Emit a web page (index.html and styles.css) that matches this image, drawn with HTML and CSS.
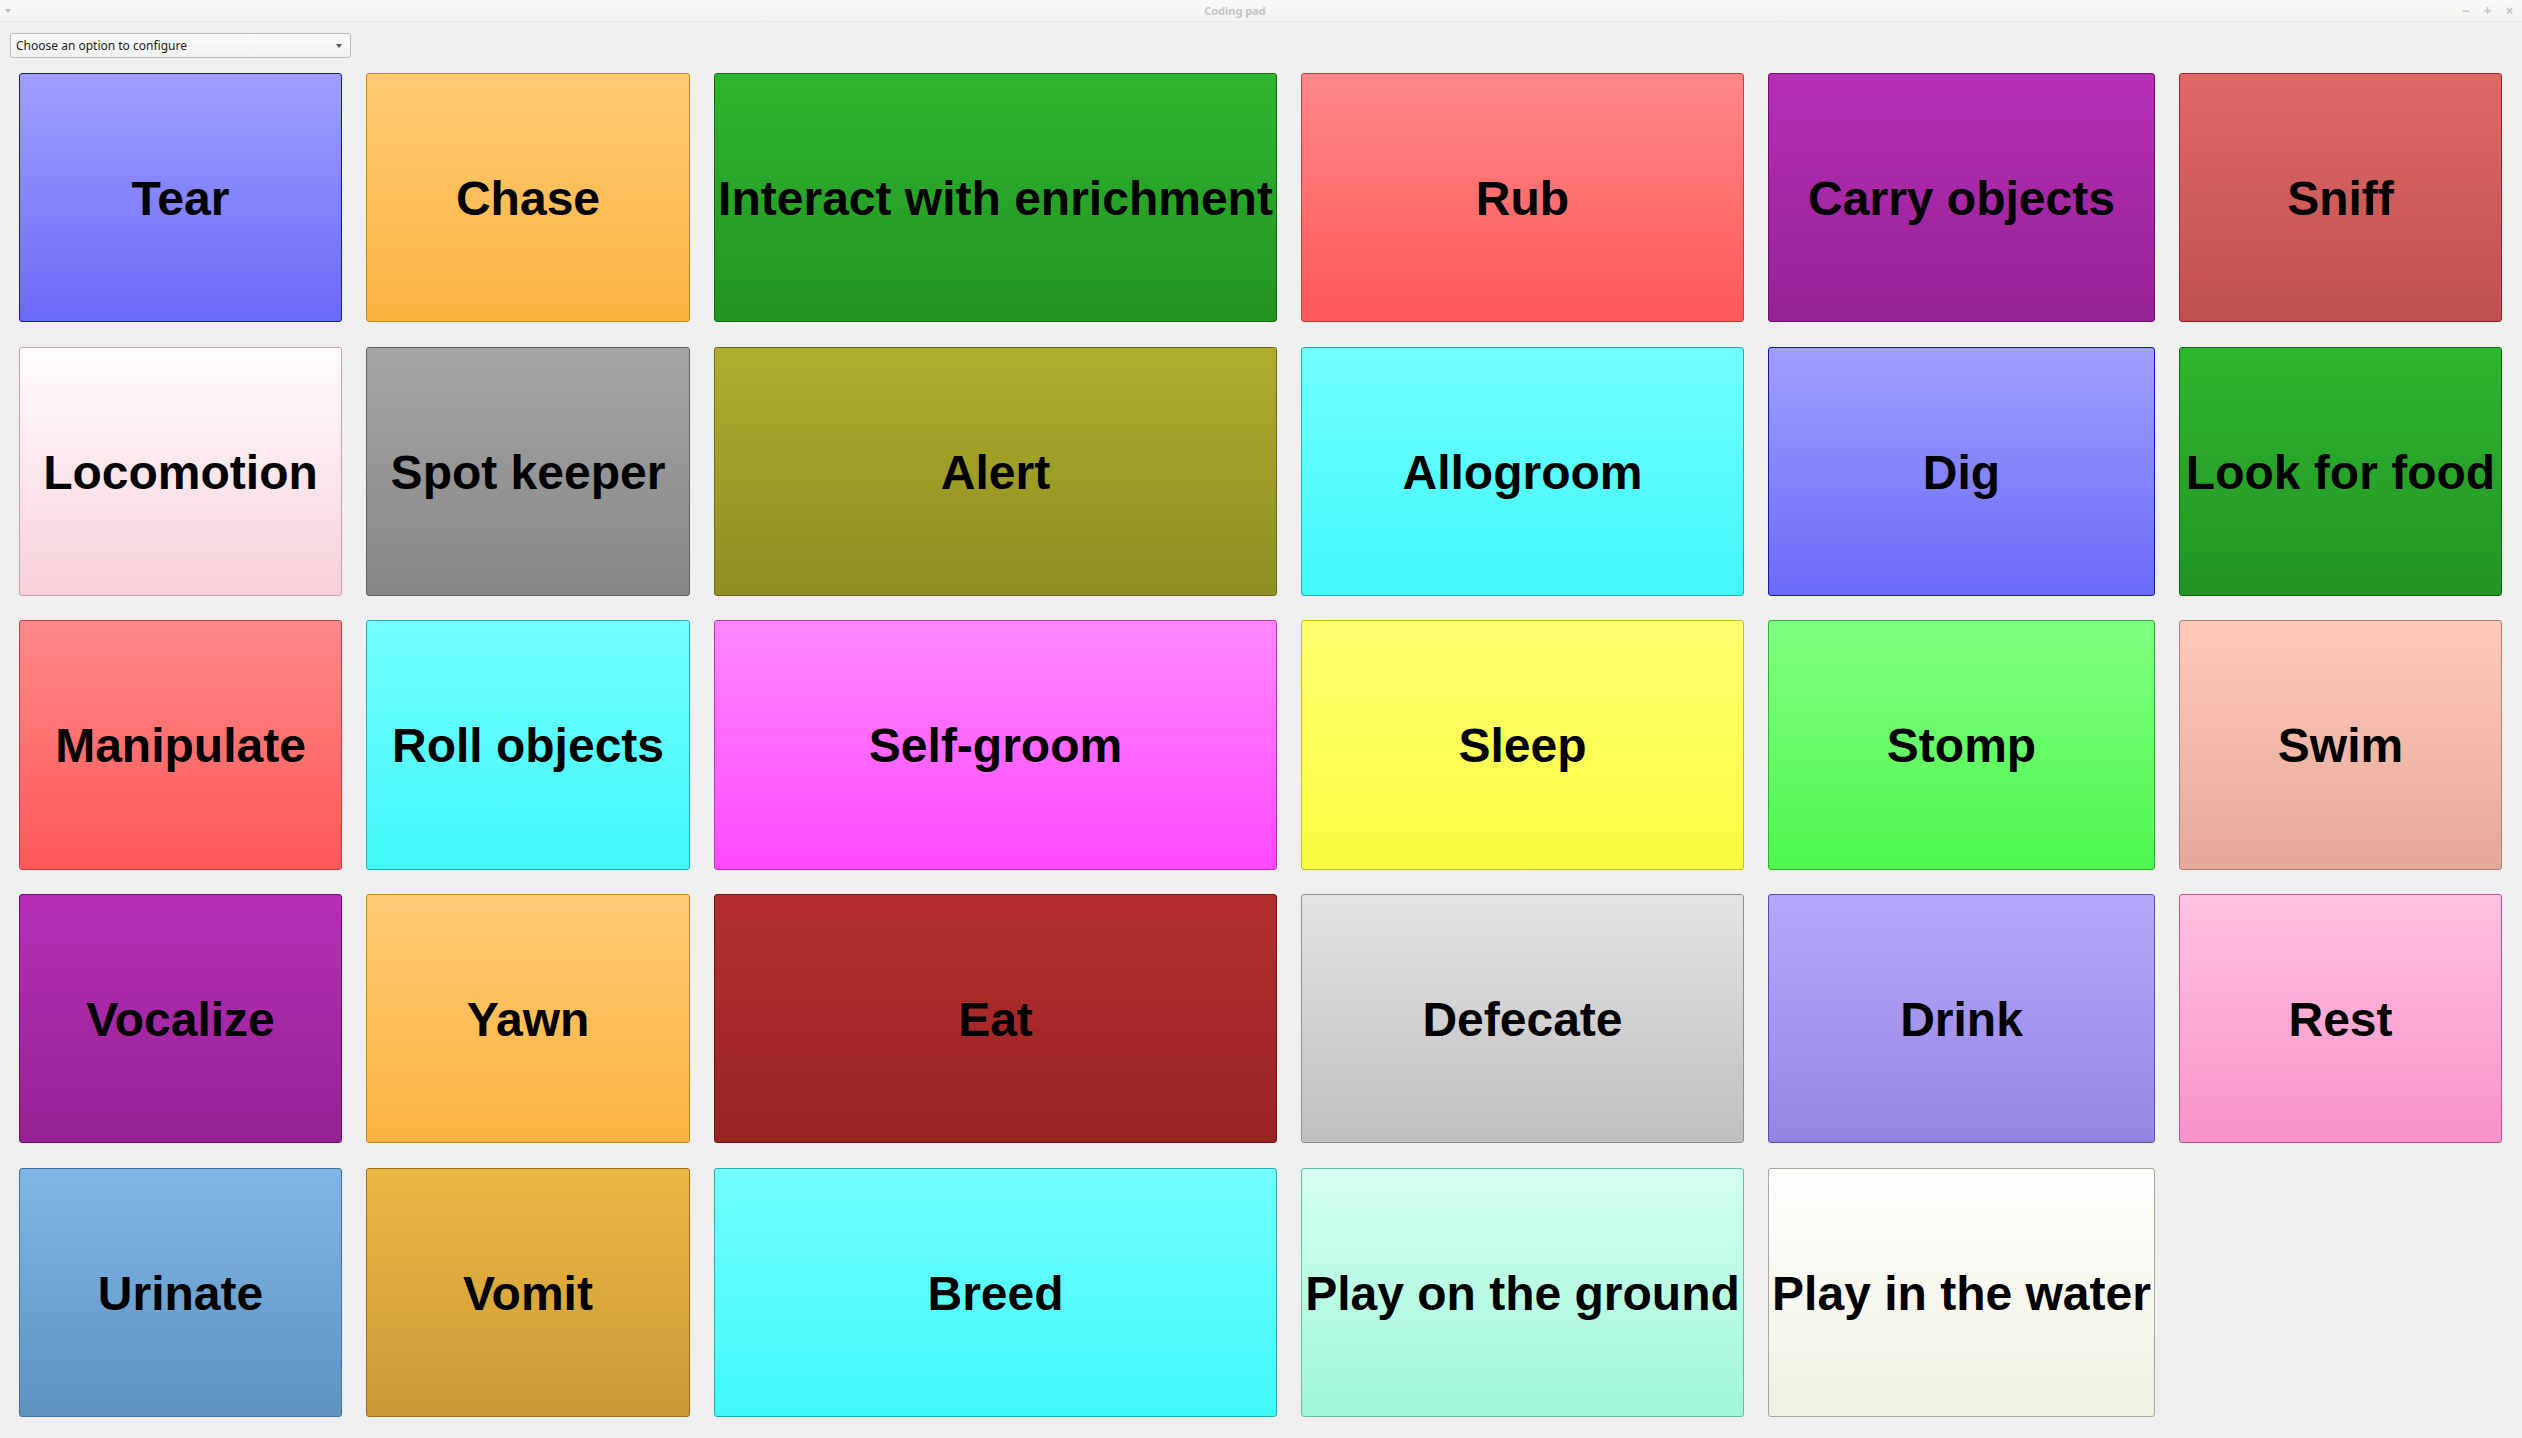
FILE: index.html
```html
<!DOCTYPE html>
<html lang="en">
<head>
<meta charset="utf-8">
<title>Coding pad</title>
<link rel="stylesheet" href="styles.css">
</head>
<body>
<div class="window">
  <header class="titlebar">
    <span class="menu-tri"></span>
    <span class="title">Coding pad</span>
    <div class="controls">
      <span class="ctl">&#8722;</span>
      <span class="ctl">+</span>
      <span class="ctl">&#215;</span>
    </div>
  </header>
  <div class="toolbar">
    <div class="combo">
      <span class="combo-text">Choose an option to configure</span>
      <span class="combo-arrow"></span>
    </div>
  </div>
  <main class="pad">
    <button class="key c-blue">Tear</button>
    <button class="key c-orange">Chase</button>
    <button class="key c-green">Interact with enrichment</button>
    <button class="key c-red">Rub</button>
    <button class="key c-purple">Carry objects</button>
    <button class="key c-sniff">Sniff</button>

    <button class="key c-blush">Locomotion</button>
    <button class="key c-gray">Spot keeper</button>
    <button class="key c-olive">Alert</button>
    <button class="key c-cyan">Allogroom</button>
    <button class="key c-blue">Dig</button>
    <button class="key c-green">Look for food</button>

    <button class="key c-red">Manipulate</button>
    <button class="key c-cyan">Roll objects</button>
    <button class="key c-magenta">Self-groom</button>
    <button class="key c-yellow">Sleep</button>
    <button class="key c-lime">Stomp</button>
    <button class="key c-salmon">Swim</button>

    <button class="key c-purple">Vocalize</button>
    <button class="key c-orange">Yawn</button>
    <button class="key c-darkred">Eat</button>
    <button class="key c-silver">Defecate</button>
    <button class="key c-lavender">Drink</button>
    <button class="key c-pink">Rest</button>

    <button class="key c-steel">Urinate</button>
    <button class="key c-mustard">Vomit</button>
    <button class="key c-cyan">Breed</button>
    <button class="key c-mint">Play on the ground</button>
    <button class="key c-ivory">Play in the water</button>
  </main>
</div>
</body>
</html>
```

FILE: styles.css
```css
* { box-sizing: border-box; }

html, body {
  margin: 0;
  padding: 0;
  background: #efefef;
  width: 2522px;
  height: 1438px;
  overflow: hidden;
}

.window {
  display: flex;
  flex-direction: column;
  height: 1438px;
}

.titlebar {
  height: 22px;
  flex: 0 0 22px;
  display: flex;
  align-items: center;
  background: linear-gradient(#f9f9f7, #f2f2f0);
  border-bottom: 1px solid #e8e8e6;
  padding: 0 6px 0 5px;
  font-family: "Noto Sans", "DejaVu Sans", sans-serif;
}

.menu-tri {
  width: 0;
  height: 0;
  border-left: 3px solid transparent;
  border-right: 3px solid transparent;
  border-top: 4px solid #b4b4b4;
  margin-top: 1px;
}

.title {
  flex: 1;
  text-align: center;
  font-size: 11px;
  font-weight: bold;
  color: #c4c4c4;
}

.controls {
  display: flex;
  gap: 9px;
}

.ctl {
  font-size: 14px;
  line-height: 14px;
  width: 13px;
  text-align: center;
  color: #c6c6c6;
  font-weight: bold;
}

.toolbar {
  padding: 11px 0 0 10px;
  flex: 0 0 51px;
}

.combo {
  width: 341px;
  height: 25px;
  border: 1px solid #bcbcbc;
  border-radius: 3px;
  background: linear-gradient(#fbfbfb, #f1f1f1);
  display: flex;
  align-items: center;
  justify-content: space-between;
  padding: 0 8px 0 5px;
  font-family: "Noto Sans", "DejaVu Sans", sans-serif;
  font-size: 12px;
  color: #1c1c1c;
}

.combo-arrow {
  width: 0;
  height: 0;
  border-left: 3.5px solid transparent;
  border-right: 3.5px solid transparent;
  border-top: 4px solid #555;
}

.pad {
  display: grid;
  grid-template-columns: 323px 324px 563px 443px 387px 323px;
  grid-template-rows: repeat(5, 1fr);
  column-gap: 24px;
  row-gap: 24.5px;
  margin: 0 20px 0 19px;
  height: 1344px;
}

.key {
  margin: 0;
  padding: 2px 0 0 0;
  border: 1px solid #888;
  border-radius: 3px;
  font-family: "Liberation Sans", Arial, sans-serif;
  font-weight: bold;
  font-size: 48px;
  color: #000;
  white-space: nowrap;
  overflow: visible;
  display: flex;
  align-items: center;
  justify-content: center;
  min-width: 0;
}

.c-blue     { background: linear-gradient(#9f9fff, #6a6af9); border-color: #1414b0; }
.c-orange   { background: linear-gradient(#ffcb73, #fab33f); border-color: #c88a12; }
.c-green    { background: linear-gradient(#2eb52e, #239423); border-color: #0f6a0f; }
.c-red      { background: linear-gradient(#ff8888, #ff5858); border-color: #c04040; }
.c-purple   { background: linear-gradient(#b62eb6, #952395); border-color: #6a106a; }
.c-sniff    { background: linear-gradient(#e26868, #bf4f4f); border-color: #902828; }
.c-blush    { background: linear-gradient(#fffdfe, #f8d0da); border-color: #c8a0a8; }
.c-gray     { background: linear-gradient(#a5a5a5, #878787); border-color: #606060; }
.c-olive    { background: linear-gradient(#aeae2e, #8e8e22); border-color: #6a6a10; }
.c-cyan     { background: linear-gradient(#72ffff, #40f7f7); border-color: #22b0b0; }
.c-magenta  { background: linear-gradient(#ff88ff, #ff4aff); border-color: #c030c0; }
.c-yellow   { background: linear-gradient(#ffff72, #fbfb40); border-color: #c0c020; }
.c-lime     { background: linear-gradient(#80ff80, #4ff74f); border-color: #30b030; }
.c-salmon   { background: linear-gradient(#fdcab9, #e6a898); border-color: #b08070; }
.c-darkred  { background: linear-gradient(#b52e2e, #982323); border-color: #701010; }
.c-silver   { background: linear-gradient(#e4e4e4, #bfbfbf); border-color: #909090; }
.c-lavender { background: linear-gradient(#b4a8fb, #9585e2); border-color: #5a4ab0; }
.c-pink     { background: linear-gradient(#ffc2e2, #f892c8); border-color: #c05090; }
.c-steel    { background: linear-gradient(#80b6e6, #5e93c0); border-color: #3e70a0; }
.c-mustard  { background: linear-gradient(#edb944, #c99935); border-color: #9a7010; }
.c-mint     { background: linear-gradient(#d4fff0, #9ff7d7); border-color: #60c0a0; }
.c-ivory    { background: linear-gradient(#ffffff, #f0f0e0); border-color: #a8a898; }
```
